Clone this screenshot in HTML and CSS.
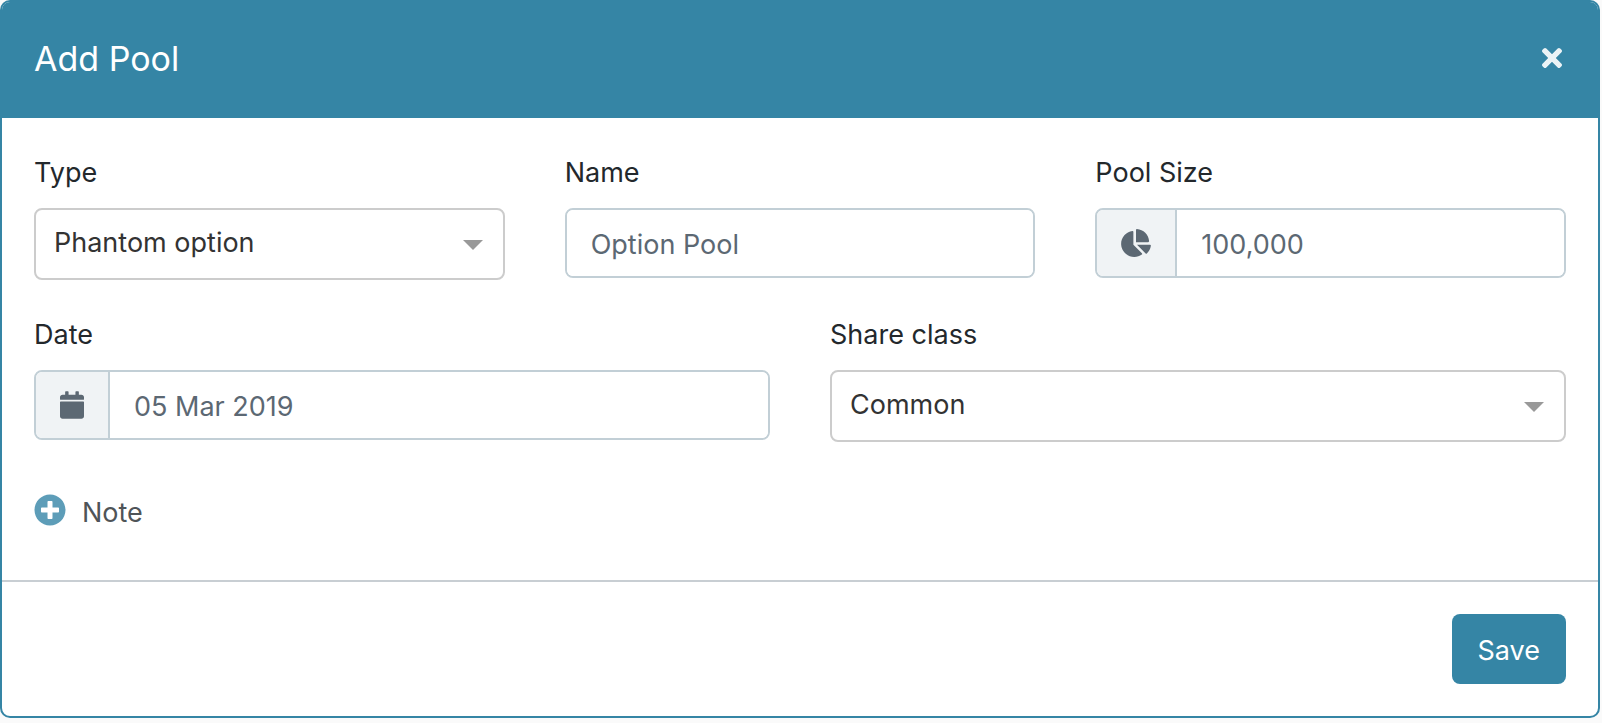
FILE: index.html
```html
<!DOCTYPE html>
<html lang="en">
<head>
<meta charset="utf-8">
<title>Add Pool</title>
<link rel="stylesheet" href="styles.css">
</head>
<body>
<form class="dialog" role="dialog" aria-labelledby="dialog-title">
  <header class="dialog-header">
    <h1 class="dialog-title" id="dialog-title">Add Pool</h1>
    <button class="close" type="button" aria-label="Close">
      <svg class="icon-close" viewBox="0 80 352 352" aria-hidden="true"><path d="M242.72 256l100.07-100.07c12.28-12.28 12.28-32.19 0-44.48l-22.24-22.24c-12.28-12.28-32.19-12.28-44.48 0L176 189.28 75.93 89.21c-12.28-12.28-32.19-12.28-44.48 0L9.21 111.45c-12.28 12.28-12.28 32.19 0 44.48L109.28 256 9.21 356.07c-12.28 12.28-12.28 32.19 0 44.48l22.24 22.24c12.28 12.28 32.2 12.28 44.48 0L176 322.72l100.07 100.07c12.28 12.28 32.2 12.28 44.48 0l22.24-22.24c12.28-12.28 12.28-32.19 0-44.48L242.72 256z"/></svg>
    </button>
  </header>
  <div class="dialog-body">
    <div class="row">
      <div class="field">
        <label class="label" for="type">Type</label>
        <div class="select-wrap">
          <select class="select" id="type"><option>Phantom option</option></select>
          <svg class="arrow" viewBox="0 0 20 10" aria-hidden="true"><path d="M0 0h20L10 10z"/></svg>
        </div>
      </div>
      <div class="field">
        <label class="label" for="name">Name</label>
        <div class="input-group"><input class="input" id="name" type="text" value="Option Pool"></div>
      </div>
      <div class="field">
        <label class="label" for="size">Pool Size</label>
        <div class="input-group">
          <span class="addon"><svg class="icon-pie" viewBox="0 0 544 512" aria-hidden="true"><path d="M527.79 288H290.5l158.03 158.03c6.04 6.04 15.98 6.53 22.19.68 38.7-36.46 65.32-85.61 73.13-140.86 1.34-9.46-6.51-17.85-16.06-17.85zm-15.83-64.8C503.72 103.74 408.26 8.28 288.8.04 279.68-.59 272 7.1 272 16.24V240h223.77c9.14 0 16.82-7.68 16.19-16.8zM224 288V50.71c0-9.55-8.39-17.4-17.84-16.06C86.99 51.49-4.1 155.6.14 280.37 4.5 408.51 114.83 513.59 243.03 511.98c50.4-.63 96.97-16.87 135.26-44.03 7.9-5.6 8.42-17.23 1.57-24.08L224 288z"/></svg></span>
          <input class="input" id="size" type="text" value="100,000">
        </div>
      </div>
    </div>
    <div class="row">
      <div class="field">
        <label class="label" for="date">Date</label>
        <div class="input-group">
          <span class="addon"><svg class="icon-calendar" viewBox="0 0 448 512" aria-hidden="true"><path d="M12 192h424c6.6 0 12 5.4 12 12v260c0 26.5-21.5 48-48 48H48c-26.5 0-48-21.5-48-48V204c0-6.6 5.4-12 12-12zm436-44v-36c0-26.5-21.5-48-48-48h-48V12c0-6.6-5.4-12-12-12h-40c-6.6 0-12 5.4-12 12v52H160V12c0-6.6-5.4-12-12-12h-40c-6.6 0-12 5.4-12 12v52H48C21.5 64 0 85.5 0 112v36c0 6.6 5.4 12 12 12h424c6.6 0 12-5.4 12-12z"/></svg></span>
          <input class="input" id="date" type="text" value="05 Mar 2019">
        </div>
      </div>
      <div class="field">
        <label class="label" for="share">Share class</label>
        <div class="select-wrap">
          <select class="select" id="share"><option>Common</option></select>
          <svg class="arrow" viewBox="0 0 20 10" aria-hidden="true"><path d="M0 0h20L10 10z"/></svg>
        </div>
      </div>
    </div>
    <button class="note" type="button">
      <svg class="icon-plus" viewBox="0 0 512 512" aria-hidden="true"><path d="M256 8C119 8 8 119 8 256s111 248 248 248 248-111 248-248S393 8 256 8zm144 276c0 6.6-5.4 12-12 12h-92v92c0 6.6-5.4 12-12 12h-56c-6.6 0-12-5.4-12-12v-92h-92c-6.6 0-12-5.4-12-12v-56c0-6.6 5.4-12 12-12h92v-92c0-6.6 5.4-12 12-12h56c6.6 0 12 5.4 12 12v92h92c6.6 0 12 5.4 12 12v56z"/></svg>
      <span>Note</span>
    </button>
  </div>
  <footer class="dialog-footer">
    <button class="save" type="submit">Save</button>
  </footer>
</form>
</body>
</html>
```

FILE: styles.css
```css
*, *::before, *::after { box-sizing: border-box; }

body {
  margin: 0;
  padding-right: 2px;
  background: #fafafa;
  color: #23282c;
  font: 400 27px/42px Inter, "Liberation Sans", sans-serif;
}

button, input, select { font: inherit; }
svg { display: block; fill: currentColor; }

.dialog {
  background: #fff;
  border: 2px solid #3585a5;
  border-radius: 10px;
  overflow: hidden;
}

.dialog-header {
  display: flex;
  align-items: center;
  justify-content: space-between;
  padding: 31px 32px 33px;
  background: #3585a5;
  color: #fff;
}

.dialog-title { margin: 0; font-size: 34px; line-height: 52px; font-weight: 400; }

.close {
  padding: 0 4px 2px;
  border: 0;
  background: none;
  color: #ebf3f6;
}
.icon-close { width: 20px; height: 20px; }

.dialog-body {
  display: flex;
  flex-direction: column;
  gap: 32px;
  padding: 32px 32px 48px;
}

.row { display: flex; gap: 60px; }
.field { flex: 1 1 0; min-width: 0; }
.label { display: block; padding-top: 2px; margin-bottom: 14px; }

.select-wrap { display: grid; align-items: center; }
.select, .arrow { grid-area: 1 / 1; }
.select {
  width: 100%;
  height: 72px;
  padding: 0 60px 2px 18px;
  border: 2px solid #ccc;
  border-radius: 8px;
  background: #fff;
  color: #333;
  appearance: none;
}
.arrow {
  width: 20px;
  height: 10px;
  margin-top: 2px;
  margin-right: 22px;
  justify-self: end;
  color: #999;
  pointer-events: none;
}

.input-group {
  display: flex;
  height: 70px;
  border: 2px solid #c2cfd6;
  border-radius: 8px;
  overflow: hidden;
}
.addon {
  display: flex;
  align-items: center;
  padding: 0 24px;
  border-right: 2px solid #c2cfd6;
  background: #f0f3f5;
  color: #5c6873;
}
.icon-pie { width: 30px; height: 28px; }
.icon-calendar { width: 24px; height: 28px; }
.input {
  flex: 1;
  min-width: 0;
  padding: 3px 24px 0;
  border: 0;
  background: #fff;
  color: #5c6873;
}

.note {
  display: flex;
  align-items: flex-start;
  align-self: flex-start;
  gap: 16px;
  margin-top: 16px;
  padding: 2px 0 0;
  border: 0;
  margin-bottom: -2px;
  background: none;
  color: #4f5458;
}
.icon-plus { width: 32px; height: 32px; margin-top: 2px; color: #5d9db8; }

.dialog-footer {
  display: flex;
  justify-content: flex-end;
  padding: 32px;
  border-top: 2px solid #c8ced3;
}
.save {
  height: 70px;
  padding: 3px 26px 0;
  border: 0;
  border-radius: 8px;
  background: #3585a5;
  color: #fff;
}
```
